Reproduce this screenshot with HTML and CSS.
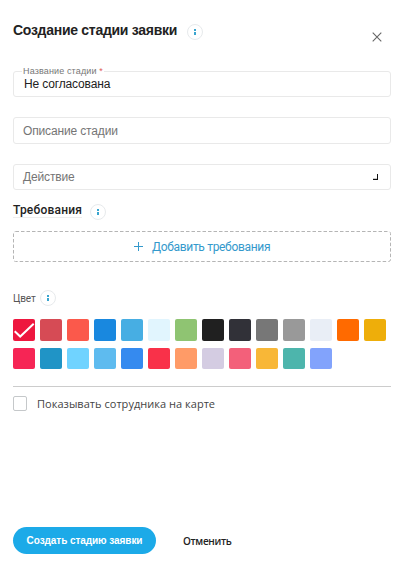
FILE: index.html
```html
<!DOCTYPE html>
<html lang="ru">
<head>
<meta charset="utf-8">
<title>Создание стадии заявки</title>
<link rel="stylesheet" href="styles.css">
</head>
<body>
<form class="dialog">
  <header class="header">
    <h1 class="title">Создание стадии заявки</h1>
    <span class="info"></span>
    <svg class="close" viewBox="0 0 10 10"><path d="M.7.7l8.6 8.6M9.3.7L.7 9.3"/></svg>
  </header>
  <div class="field field-name">
    <label class="field-label">Название стадии <b>*</b></label>
    <span class="value">Не согласована</span>
  </div>
  <div class="field field-desc"><span class="placeholder">Описание стадии</span></div>
  <div class="field field-action"><span class="placeholder">Действие</span><i class="corner"></i></div>
  <div class="section">
    <h2 class="subtitle">Требования</h2>
    <span class="info"></span>
  </div>
  <div class="add">
    <svg class="dash" width="378" height="31"><rect x=".5" y=".5" width="377" height="30" rx="2"/></svg>
    <svg class="plus" viewBox="0 0 9 9"><path d="M0 4.5h9M4.5 0v9"/></svg>
    <span class="add-text">Добавить требования</span>
  </div>
  <div class="color-head"><span class="color-text">Цвет</span><span class="info"></span></div>
  <div class="swatches">
    <i class="c1"><svg viewBox="0 0 22 22"><path d="M1.7 12.2l5.5 5.3L20.7 4.8"/></svg></i><i class="c2"></i><i class="c3"></i><i class="c4"></i><i class="c5"></i><i class="c6"></i><i class="c7"></i><i class="c8"></i><i class="c9"></i><i class="c10"></i><i class="c11"></i><i class="c12"></i><i class="c13"></i><i class="c14"></i>
    <i class="c15"></i><i class="c16"></i><i class="c17"></i><i class="c18"></i><i class="c19"></i><i class="c20"></i><i class="c21"></i><i class="c22"></i><i class="c23"></i><i class="c24"></i><i class="c25"></i><i class="c26"></i>
  </div>
  <div class="option"><span class="checkbox"></span><span class="option-text">Показывать сотрудника на карте</span></div>
  <footer class="footer">
    <button type="button" class="submit">Создать стадию заявки</button>
    <button type="button" class="cancel">Отменить</button>
  </footer>
</form>
</body>
</html>
```
FILE: styles.css
```css
* { box-sizing: border-box; }
body { margin: 0; background: #fff; font-family: "Liberation Sans", Arial, sans-serif; color: #222; }
.dialog { display: flex; flex-direction: column; height: 576px; padding: 22px 12px 22px 13px; white-space: nowrap; }
.header { display: flex; height: 49px; align-items: flex-start; }
.title { margin: 0; width: 174px; font-size: 14px; line-height: 17px; font-weight: 700; letter-spacing: -.28px; }
.info { flex: none; display: flex; flex-direction: column; align-items: center; width: 16px; height: 16px; border: 1px solid #e7eaec; border-radius: 50%; padding-top: 4px; }
.header .info { margin-top: 2px; }
.info::before { content: ""; width: 2px; height: 2px; background: #3aa5cf; margin-bottom: 1px; }
.info::after { content: ""; width: 2px; height: 3px; background: #3aa5cf; }
.close { width: 10px; height: 10px; margin: 9.5px 9px 0 auto; fill: none; stroke: #666; stroke-width: 1.1; }
.field { position: relative; display: flex; align-items: center; height: 26px; border: 1px solid #e9e9e9; border-radius: 3px; padding: 0 9px; font-size: 12px; letter-spacing: -.15px; }
.field-name { margin-bottom: 20px; }
.field-label { position: absolute; left: 8px; top: -7px; padding: 0 1px; background: #fff; color: #777; font-size: 9px; line-height: 12px; letter-spacing: .14px; }
.field-label b { color: #e05b55; font-weight: 400; }
.value { padding: 0 0 1px 1px; }
.placeholder { color: #757575; }
.field-desc { height: 27px; margin-bottom: 20px; }
.corner { width: 5px; height: 6px; margin: 0 3px 1px auto; border: solid #111; border-width: 0 1px 1px 0; box-shadow: inset 0 -1px #ccc; }
.section { display: flex; height: 41px; padding-top: 14px; }
.subtitle { margin: -1px 8px 0 0; width: 69px; height: 15px; border-bottom: 1px solid #eee; font: 500 12px/15px Roboto, sans-serif; letter-spacing: .2px; }
.add { position: relative; display: flex; align-items: center; height: 31px; padding-left: 121px; color: #3499cc; font: 12px Roboto, sans-serif; letter-spacing: -.32px; }
.dash { position: absolute; inset: 0; fill: none; stroke: #b5b5b5; stroke-dasharray: 3.5 2; }
.plus { width: 9px; height: 9px; margin-right: 9px; fill: none; stroke: #3499cc; stroke-width: 1; }
.color-head { display: flex; align-items: center; height: 16px; margin-top: 28px; }
.color-text { width: 27px; color: #555; font: 10px Roboto, sans-serif; letter-spacing: -.1px; }
.swatches { display: grid; grid-template-columns: repeat(14, 22px); grid-template-rows: 22px 21px; gap: 7px 5px; margin-top: 13px; }
.swatches i { border-radius: 2px; }
.swatches svg { display: block; width: 22px; height: 22px; fill: none; stroke: #fff; stroke-width: 2; }
.c1 { background: #ee173f; } .c2 { background: #d64b55; } .c3 { background: #fb594b; } .c4 { background: #1988df; }
.c5 { background: #47aee3; } .c6 { background: #e1f5fe; } .c7 { background: #8fc472; } .c8 { background: #202020; }
.c9 { background: #313138; } .c10 { background: #777; } .c11 { background: #999; } .c12 { background: #e9eef6; }
.c13 { background: #ff6a00; } .c14 { background: #eeae0a; } .c15 { background: #f62555; } .c16 { background: #2094c6; }
.c17 { background: #70d3ff; } .c18 { background: #5ebbef; } .c19 { background: #358aef; } .c20 { background: #f93149; }
.c21 { background: #ff9b67; } .c22 { background: #d4cce2; } .c23 { background: #f3607a; } .c24 { background: #f8b737; }
.c25 { background: #4db5ac; } .c26 { background: #82a3fc; }
.option { display: flex; height: 26px; margin-top: 17px; padding-top: 9px; border-top: 1px solid #ccc; }
.checkbox { width: 14px; height: 15px; margin-right: 10px; border: 1px solid #c5c8ca; border-radius: 2px; }
.option-text { color: #444; font: 11px/16px "Open Sans", sans-serif; letter-spacing: .03px; }
.footer { display: flex; margin-top: auto; }
button { border: 0; padding: 0; background: none; white-space: nowrap; }
.submit { width: 143px; height: 27px; border-radius: 14px; background: #1caae8; color: #fff; font: 700 10px "Liberation Sans", sans-serif; letter-spacing: -.07px; }
.cancel { margin-left: 27px; color: #222; font: 600 10px "Open Sans", sans-serif; letter-spacing: -.33px; }
```
